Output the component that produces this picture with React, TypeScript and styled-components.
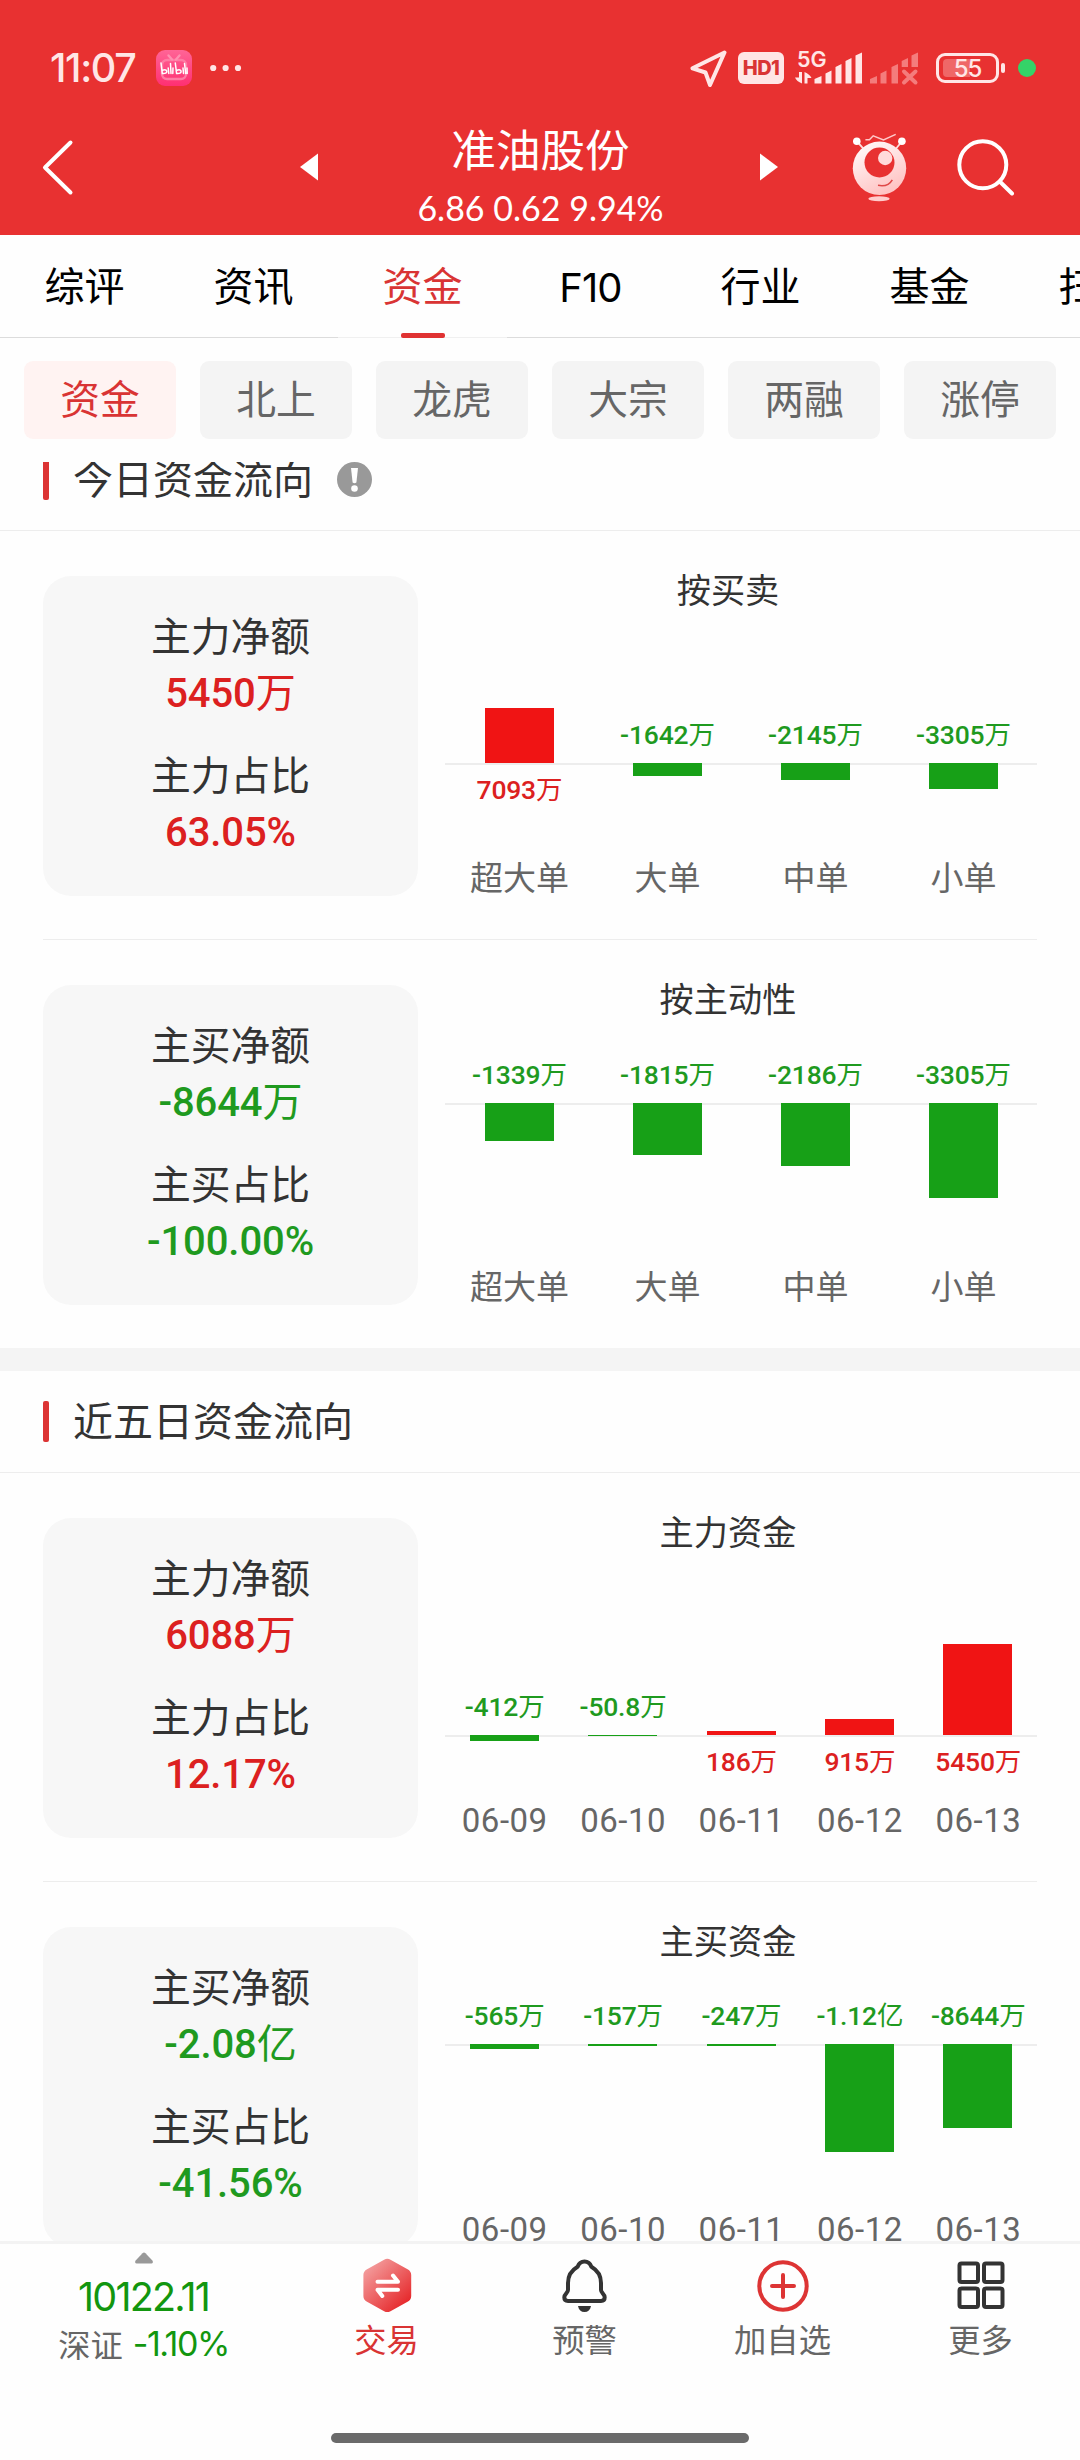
import React from "react";
import styled, { createGlobalStyle, css } from "styled-components";

const CJK = `"Noto Sans CJK SC", sans-serif`;
const DIN = `Roboto, "Noto Sans CJK SC", sans-serif`;
const GEO = `Inter, "Noto Sans CJK SC", sans-serif`;

const RED = "#d93434";
const UP = "#dc2020";
const DOWN = "#1f9a1f";
const UP_BAR = "#f01414";
const DOWN_BAR = "#17a017";

const GlobalStyle = createGlobalStyle`
  * { box-sizing: border-box; }
  body { margin: 0; background: #fff; }
`;

const Screen = styled.div`
  width: 1080px;
  height: 2460px;
  display: flex;
  flex-direction: column;
  overflow: hidden;
  background: #fefefe;
  font-family: ${CJK};
  white-space: nowrap;
`;

/* ---------- red top area ---------- */

const Top = styled.header`
  height: 235px;
  flex: none;
  background: #e83131;
  color: #fff;
`;

const StatusBar = styled.div`
  height: 100px;
  padding: 36px 44px 0 50px;
  display: flex;
  justify-content: space-between;
`;

const StatusGroup = styled.div`
  height: 64px;
  display: flex;
  align-items: center;
`;

const Clock = styled.span`
  width: 106px;
  font: 500 39.5px/64px ${GEO};
  letter-spacing: -1.3px;
  color: #ffe6e6;
`;

const AppBadge = styled.div`
  width: 36px;
  height: 36px;
  margin-right: 18px;
  border-radius: 9px;
  overflow: hidden;
  background: linear-gradient(#ff6496, #ff2f72);
  svg { display: block; }
`;

const HdBadge = styled.span`
  width: 46px;
  height: 32px;
  margin: 0 11px 0 11px;
  border-radius: 6px;
  background: #ffe6e6;
  color: ${RED};
  font: 800 20px/33px ${GEO};
  letter-spacing: -0.6px;
  text-align: center;
`;

const Network = styled.div`
  position: relative;
  width: 124px;
  height: 36px;
  svg { display: block; }
`;

const NetworkLabel = styled.span`
  position: absolute;
  left: 2px;
  top: 0;
  font: 600 21.5px/18px ${GEO};
  color: #ffe6e6;
`;

const Battery = styled.div`
  position: relative;
  width: 63px;
  height: 30px;
  margin: 0 2px 0 17px;
  border: 3px solid #ffe6e6;
  border-radius: 9px;
  padding: 3px 4px;
`;

const BatteryFill = styled.div`
  width: 27px;
  height: 18px;
  border-radius: 4px 0 0 4px;
  background: #ef6767;
`;

const BatteryText = styled.span`
  position: absolute;
  inset: 0;
  font: 500 24px/25px ${GEO};
  letter-spacing: -1px;
  text-align: center;
  color: #ffe6e6;
`;

const BatteryCap = styled.div`
  width: 4px;
  height: 10px;
  border-radius: 2px;
  background: #ffe6e6;
  margin-right: 13px;
`;

const LiveDot = styled.div`
  width: 18px;
  height: 18px;
  border-radius: 50%;
  background: #35d368;
`;

const TitleBar = styled.div`
  height: 135px;
  display: grid;
  grid-template-columns: 300px 478px 75px 1fr;
  svg { display: block; }
`;

const BackSlot = styled.div`
  padding: 39px 0 0 41px;
`;

const StockSwitch = styled.div`
  display: flex;
  justify-content: space-between;
`;

const Arrow = styled.div`
  padding-top: 53px;
`;

const StockInfo = styled.div`
  padding-left: 3px;
`;

const StockName = styled.div`
  margin-top: 22px;
  font-size: 44.6px;
  line-height: 52px;
  text-align: center;
`;

const StockQuote = styled.div`
  font: 400 34px/44px Lato, sans-serif;
  margin-top: 12px;
  text-align: center;
`;

const Actions = styled.div`
  grid-column: 4;
  display: flex;
  gap: 44px;
  padding-top: 32px;
  margin-left: -3px;
`;

/* ---------- tabs and chips ---------- */

const Tabs = styled.nav`
  flex: none;
  height: 103px;
  display: flex;
  overflow: hidden;
`;

const Tab = styled.div<{ $active?: boolean }>`
  flex: 0 0 169px;
  height: 103px;
  display: flex;
  flex-direction: column;
  justify-content: space-between;
  align-items: center;
  border-bottom: 1px solid ${(p) => (p.$active ? "#f0f0f0" : "#dcdcdc")};
  font-family: ${CJK};
  font-size: 40px;
  line-height: 98px;
  color: ${(p) => (p.$active ? RED : "#000")};
`;

const Latin = styled.span`
  font-family: ${GEO};
  letter-spacing: -0.9px;
  line-height: 105px;
  padding-right: 2px;
`;

const TabMark = styled.div`
  width: 44px;
  height: 6px;
  margin-bottom: -1px;
  border-radius: 2px;
  background: #e03232;
`;

const Chips = styled.div`
  flex: none;
  height: 124px;
  padding: 23px 24px 0;
  display: flex;
  gap: 24px;
`;

const Chip = styled.div<{ $active?: boolean }>`
  width: 152px;
  height: 78px;
  border-radius: 9px;
  background: ${(p) => (p.$active ? "#fff3f2" : "#f4f4f4")};
  color: ${(p) => (p.$active ? RED : "#666")};
  font-size: 39.8px;
  line-height: 72px;
  text-align: center;
`;

/* ---------- sections ---------- */

const Content = styled.main`
  flex: none;
  height: 1779px;
  overflow: hidden;
`;

const SectionHead = styled.div<{ $tucked?: boolean }>`
  height: 102px;
  margin-top: ${(p) => (p.$tucked ? "-33px" : "0")};
  padding-left: 43px;
  display: flex;
  align-items: center;
  border-bottom: 1px solid #ededed;
`;

const SectionMark = styled.div`
  width: 6px;
  height: 41px;
  border-radius: 2px;
  background: #dc3434;
`;

const SectionTitle = styled.h2`
  margin: 0 24px 0 24px;
  font-weight: 400;
  font-size: 40px;
  line-height: 60px;
  color: #333;
  padding-bottom: 5px;
`;

const Block = styled.section<{ $last?: boolean }>`
  height: 409px;
  margin: 0 43px;
  display: flex;
  border-bottom: ${(p) => (p.$last ? "none" : "1px solid #ededed")};
`;

const Band = styled.div`
  height: 23px;
  margin-top: -1px;
  background: #f4f4f4;
`;

const Card = styled.div`
  flex: none;
  width: 375px;
  height: 320px;
  margin-top: 45px;
  padding-top: 33px;
  border-radius: 28px;
  background: #f7f7f7;
  text-align: center;
`;

const CardLabel = styled.div`
  font-size: 39.8px;
  line-height: 50px;
  color: #333;
`;

const tone = css<{ $up: boolean }>`
  color: ${(p) => (p.$up ? UP : DOWN)};
`;

const CardValue = styled.div<{ $up: boolean }>`
  ${tone}
  font: 500 40px/56px ${DIN};
  letter-spacing: -0.1px;
  margin: 7px 0 26px;
`;

const Unit = styled.span`
  font-weight: 400;
  letter-spacing: 0;
`;

const ChartPane = styled.div`
  width: 619px;
  padding-top: 37px;
`;

const ChartTitle = styled.div`
  font-size: 34.2px;
  line-height: 40px;
  padding-left: 1px;
  text-align: center;
  color: #333;
`;

const Plot = styled.div`
  margin: 3px 0 0 27px;
  display: flex;
`;

const Column = styled.div`
  flex: 1 1 0;
  width: 0;
`;

const Above = styled.div`
  display: flex;
  flex-direction: column;
  justify-content: flex-end;
  align-items: center;
`;

const Below = styled.div`
  display: flex;
  flex-direction: column;
  align-items: center;
  border-top: 2px solid #ededed;
`;

const Bar = styled.div<{ $up: boolean }>`
  flex: none;
  width: 69px;
  background: ${(p) => (p.$up ? UP_BAR : DOWN_BAR)};
  margin-top: ${(p) => (p.$up ? "0" : "-2px")};
`;

const BarValue = styled.div<{ $up: boolean }>`
  ${tone}
  font: 500 26.5px/32px ${DIN};
  letter-spacing: -0.2px;
  padding-left: 1px;
  margin: ${(p) => (p.$up ? "9px 0 0" : "0 0 12px")};
`;

const Category = styled.div<{ $date?: boolean }>`
  font-family: ${(p) => (p.$date ? DIN : CJK)};
  font-size: 33px;
  line-height: ${(p) => (p.$date ? "42px" : "37px")};
  letter-spacing: ${(p) => (p.$date ? "0.5px" : "0")};
  padding-left: 1px;
  text-align: center;
  color: #666;
`;

/* ---------- bottom bar ---------- */

const BottomBar = styled.footer`
  flex: none;
  height: 219px;
  border-top: 3px solid #f3f3f3;
  display: flex;
  flex-direction: column;
  align-items: center;
  justify-content: space-between;
  svg { display: block; }
`;

const BottomRow = styled.div`
  width: 100%;
  display: grid;
  grid-template-columns: 287px repeat(4, 198px);
`;

const IndexCell = styled.div`
  display: flex;
  flex-direction: column;
  align-items: center;
  padding-top: 8px;
`;

const IndexValue = styled.div`
  margin-top: 9px;
  font: 400 39.5px/48px ${GEO};
  letter-spacing: -1.8px;
  color: #12960f;
`;

const IndexChange = styled.div`
  display: flex;
  align-items: center;
  gap: 10px;
  margin-top: -2px;
  font-size: 32.3px;
  line-height: 46px;
  color: #666;
  b { padding-top: 2px; font: 400 34px/46px ${GEO}; letter-spacing: -1.5px; color: #12960f; }
`;

const NavItem = styled.div<{ $active?: boolean }>`
  display: flex;
  flex-direction: column;
  align-items: center;
  padding: 12px 0 0 1px;
  font-size: 32.3px;
  line-height: 44px;
  color: ${(p) => (p.$active ? RED : "#666")};
  span { margin-top: 2px; }
`;

const HomeIndicator = styled.div`
  width: 418px;
  height: 10px;
  margin-bottom: 17px;
  border-radius: 5px;
  background: #6a6a6a;
`;

/* ---------- icons ---------- */

const BiliIcon = () => (
  <svg width="36" height="36" viewBox="0 0 36 36" fill="none">
    <rect x="6" y="10" width="24" height="19" rx="5" stroke="#ff7ba4" strokeWidth="2.400" />
    <path d="M12.500 5.500l3.500 4M23.500 5.500l-3.500 4" stroke="#ff8fb1" strokeWidth="2.400" strokeLinecap="round" />
    <g stroke="#fff" strokeWidth="1.500" strokeLinecap="round">
      <path d="M5 13l1.300 10.500c3 .3 4.500-.5 4.500-2s-1.800-2.200-4.200-1.200M12.200 18l.6 5.500M14.500 13.500l.5 10M17 18l-.2 5.500" />
      <path d="M19.300 13l1.300 10.500c3 .3 4.500-.5 4.500-2s-1.800-2.200-4.200-1.200M27 18l.5 5.500M28.500 13.500l1.200 10M31 18l.2 5.500" />
    </g>
  </svg>
);

const DotsIcon = () => (
  <svg width="32" height="8" viewBox="0 0 32 8" fill="#ffe6e6">
    <circle cx="3.200" cy="4" r="3.100" />
    <circle cx="15.600" cy="4" r="3.100" />
    <circle cx="28" cy="4" r="3.100" />
  </svg>
);

const LocationIcon = () => (
  <svg width="38" height="40" viewBox="689 49 38 40" fill="none">
    <path d="M724.500 53.500L692.500 69.300L705.500 73.500L710 86Z" stroke="#ffe6e6" strokeWidth="4" strokeLinejoin="round" />
  </svg>
);

const SignalIcon = () => (
  <svg width="124" height="36" viewBox="795 50 124 36">
    <g fill="#ffe6e6">
      <path d="M799 72h3v11.500c-3.500-1.500-6-3.500-7-6h4zM804.500 72c3.500 1.500 6 3.500 7 6h-4v5.500h-3z" />
      <path d="M814.500 79l7-3v7.500h-7zM825.500 73.500l6-3v13h-6zM835.500 67l6-3v19.500h-6zM845.500 61l6-3v25.500h-6zM855.500 55.500l6.500-3v31h-6.500z" />
    </g>
    <g fill="#f47c7c">
      <path d="M870 79l7-3v7.500h-7zM880.500 73.500l6-3v13h-6zM891.500 67l6.500-3v19.500h-6.500zM901.700 61l6.300-3v9h-6.300zM911.500 55.500l6.500-3v14.500h-6.500z" />
      <path d="M904 71.500l11.500 11M915.500 71.500l-11.500 11" stroke="#f47c7c" strokeWidth="4" strokeLinecap="round" />
    </g>
  </svg>
);

const BackIcon = () => (
  <svg width="34" height="58" viewBox="0 0 34 58" fill="none">
    <path d="M29.500 3.500L4 28.500L29.500 53.500" stroke="#fff" strokeWidth="4" strokeLinecap="round" strokeLinejoin="round" />
  </svg>
);

const TriangleIcon = ({ flip }: { flip?: boolean }) => (
  <svg width="18" height="28" viewBox="0 0 18 28" fill="#fff">
    <path d={flip ? "M0 0.500L18 14L0 27.500Z" : "M18 0.500L0 14L18 27.500Z"} />
  </svg>
);

const RobotIcon = () => (
  <svg width="62" height="72" viewBox="850 132 62 72" fill="none">
    <defs>
      <linearGradient id="robot" x1="0" y1="0" x2="0.500" y2="1">
        <stop offset="0" stopColor="#fff" />
        <stop offset="1" stopColor="#ffc4c4" />
      </linearGradient>
    </defs>
    <path d="M865.400 139.700h4l3.800-3.900 10.300 4.200 12.200-5.600" stroke="#ffc9c9" strokeWidth="1.500" />
    <path d="M857 141.300l7 8M902 141.300l-6.500 8" stroke="#ffe0e0" strokeWidth="1.800" />
    <circle cx="856.800" cy="141.300" r="3.800" fill="#fff" />
    <circle cx="901.900" cy="141.300" r="3.800" fill="#fff" />
    <circle cx="879.500" cy="168.300" r="26.700" fill="url(#robot)" />
    <circle cx="879.500" cy="162.500" r="15" fill="#e83131" />
    <circle cx="885.200" cy="158" r="7.200" fill="#ffdada" />
    <path d="M878 185.300q10 2 14.300-5.500" stroke="#e04848" strokeWidth="1.600" />
    <ellipse cx="879" cy="198.700" rx="10.700" ry="2.500" fill="#ffcccc" />
  </svg>
);

const SearchIcon = () => (
  <svg width="60" height="64" viewBox="957 132 60 64" fill="none" stroke="#fff" strokeWidth="4" strokeLinecap="round">
    <circle cx="983.800" cy="164.700" r="23.500" />
    <path d="M1001 181.700L1013 193.500" />
  </svg>
);

const InfoIcon = () => (
  <svg width="35" height="35" viewBox="0 0 35 35">
    <circle cx="17.500" cy="17.500" r="17.500" fill="#999" />
    <path d="M14 6h7l-1.600 14.500q-1.900 1.600-3.800 0z" fill="#fff" />
    <circle cx="17.500" cy="26.500" r="3.300" fill="#fff" />
  </svg>
);

const ExpandIcon = () => (
  <svg width="20" height="12" viewBox="0 0 20 12">
    <path d="M10 0.500Q10.800 0.500 11.500 1.200L18.800 9Q19.300 11.500 17.500 11.500H2.500Q0.700 11.500 1.200 9L8.500 1.200Q9.200 0.500 10 0.500Z" fill="#999" />
  </svg>
);

const TradeIcon = () => (
  <svg width="50" height="58" viewBox="361 2256 50 58" fill="none">
    <defs>
      <linearGradient id="trade" x1="0.100" y1="0.050" x2="0.850" y2="0.900">
        <stop offset="0" stopColor="#f4a3a3" />
        <stop offset="1" stopColor="#e6282b" />
      </linearGradient>
    </defs>
    <path
      d="M389.500 2259.700L407 2269.500Q410.200 2271.500 410.200 2275V2296Q410.200 2299.500 407 2301.500L389.500 2311.200Q386.300 2313 383.100 2311.200L365.600 2301.500Q362.400 2299.500 362.400 2296V2275Q362.400 2271.500 365.600 2269.500L383.100 2259.700Q386.300 2258 389.500 2259.700Z"
      fill="url(#trade)"
    />
    <path d="M376.500 2281.700H397L392 2275.500M397 2289.800H376.500L381.300 2296" stroke="#fff" strokeWidth="4" strokeLinecap="round" strokeLinejoin="round" />
  </svg>
);

const BellIcon = () => (
  <svg width="49" height="58" viewBox="0 0 49 58">
    <path
      d="M24.500 5.500c-3.600 0-5.600 1.600-6.900 5.200C11 14.500 8 20 8 27v7c0 3-3.700 3.700-3.700 7.300c0 2.300 1.500 3.700 3.700 3.700h33c2.200 0 3.700-1.400 3.700-3.700c0-3.600-3.700-4.300-3.700-7.300v-7c0-7-3-12.500-9.600-16.300c-1.300-3.600-3.300-5.200-6.900-5.200z"
      fill="none"
      stroke="#333"
      strokeWidth="4"
      strokeLinejoin="round"
    />
    <path d="M18 50h13c-.8 4-3 6-6.500 6s-5.700-2-6.500-6z" fill="#333" />
  </svg>
);

const PlusIcon = () => (
  <svg width="52" height="58" viewBox="0 0 52 58" fill="none" stroke="#dd3434" strokeWidth="4" strokeLinecap="round">
    <circle cx="26" cy="30" r="23.700" />
    <path d="M15 30h22M26 19v22" />
  </svg>
);

const GridIcon = () => (
  <svg width="48" height="58" viewBox="0 0 48 58" fill="none" stroke="#333" strokeWidth="4">
    <rect x="2.500" y="7.500" width="18.500" height="18.500" rx="2" />
    <rect x="27" y="7.500" width="18.500" height="18.500" rx="2" />
    <rect x="2.500" y="32.500" width="18.500" height="18.500" rx="2" />
    <rect x="27" y="32.500" width="18.500" height="18.500" rx="2" />
  </svg>
);

/* ---------- data ---------- */

type Point = { name: string; text: string; value: number };
type BlockData = {
  title: string;
  stats: [string, string][];
  zero: number;
  scale: number;
  dates?: boolean;
  points: Point[];
};

const today: BlockData[] = [
  {
    title: "按买卖",
    stats: [["主力净额", "5450万"], ["主力占比", "63.05%"]],
    zero: 232,
    scale: 0.00775,
    points: [
      { name: "超大单", text: "7093万", value: 7093 },
      { name: "大单", text: "-1642万", value: -1642 },
      { name: "中单", text: "-2145万", value: -2145 },
      { name: "小单", text: "-3305万", value: -3305 },
    ],
  },
  {
    title: "按主动性",
    stats: [["主买净额", "-8644万"], ["主买占比", "-100.00%"]],
    zero: 162.5,
    scale: 0.02884,
    points: [
      { name: "超大单", text: "-1339万", value: -1339 },
      { name: "大单", text: "-1815万", value: -1815 },
      { name: "中单", text: "-2186万", value: -2186 },
      { name: "小单", text: "-3305万", value: -3305 },
    ],
  },
];

const fiveDays: BlockData[] = [
  {
    title: "主力资金",
    stats: [["主力净额", "6088万"], ["主力占比", "12.17%"]],
    zero: 261.5,
    scale: 0.0166,
    dates: true,
    points: [
      { name: "06-09", text: "-412万", value: -412 },
      { name: "06-10", text: "-50.8万", value: -50.8 },
      { name: "06-11", text: "186万", value: 186 },
      { name: "06-12", text: "915万", value: 915 },
      { name: "06-13", text: "5450万", value: 5450 },
    ],
  },
  {
    title: "主买资金",
    stats: [["主买净额", "-2.08亿"], ["主买占比", "-41.56%"]],
    zero: 162,
    scale: 0.00966,
    dates: true,
    points: [
      { name: "06-09", text: "-565万", value: -565 },
      { name: "06-10", text: "-157万", value: -157 },
      { name: "06-11", text: "-247万", value: -247 },
      { name: "06-12", text: "-1.12亿", value: -11200 },
      { name: "06-13", text: "-8644万", value: -8644 },
    ],
  },
];

const Amount = ({ text }: { text: string }) => {
  const unit = /[万亿]$/.test(text) ? text.slice(-1) : "";
  return (
    <>
      {unit ? text.slice(0, -1) : text}
      {unit && <Unit>{unit}</Unit>}
    </>
  );
};

const FlowBlock = ({ data, last }: { data: BlockData; last?: boolean }) => (
  <Block $last={last}>
    <Card>
      {data.stats.map(([label, value]) => (
        <React.Fragment key={label}>
          <CardLabel>{label}</CardLabel>
          <CardValue $up={!value.startsWith("-")}><Amount text={value} /></CardValue>
        </React.Fragment>
      ))}
    </Card>
    <ChartPane>
      <ChartTitle>{data.title}</ChartTitle>
      <Plot>
        {data.points.map((p) => {
          const up = p.value > 0;
          const size = Math.max(1, Math.abs(p.value) * data.scale);
          const bar = <Bar $up={up} style={{ height: size }} />;
          const label = <BarValue $up={up}><Amount text={p.text} /></BarValue>;
          return (
            <Column key={p.name}>
              <Above style={{ height: data.zero - 80 }}>{up ? bar : label}</Above>
              <Below style={{ height: 327 - data.zero }}>{up ? label : bar}</Below>
              <Category $date={data.dates}>{p.name}</Category>
            </Column>
          );
        })}
      </Plot>
    </ChartPane>
  </Block>
);

export default function App() {
  return (
    <>
      <GlobalStyle />
      <Screen>
        <Top>
          <StatusBar>
            <StatusGroup>
              <Clock>11:07</Clock>
              <AppBadge><BiliIcon /></AppBadge>
              <DotsIcon />
            </StatusGroup>
            <StatusGroup>
              <LocationIcon />
              <HdBadge>HD1</HdBadge>
              <Network>
                <SignalIcon />
                <NetworkLabel>5G</NetworkLabel>
              </Network>
              <Battery>
                <BatteryFill />
                <BatteryText>55</BatteryText>
              </Battery>
              <BatteryCap />
              <LiveDot />
            </StatusGroup>
          </StatusBar>
          <TitleBar>
            <BackSlot><BackIcon /></BackSlot>
            <StockSwitch>
              <Arrow><TriangleIcon /></Arrow>
              <StockInfo>
                <StockName>准油股份</StockName>
                <StockQuote>6.86 0.62 9.94%</StockQuote>
              </StockInfo>
              <Arrow><TriangleIcon flip /></Arrow>
            </StockSwitch>
            <Actions>
              <RobotIcon />
              <SearchIcon />
            </Actions>
          </TitleBar>
        </Top>

        <Tabs>
          <Tab>综评</Tab>
          <Tab>资讯</Tab>
          <Tab $active>资金<TabMark /></Tab>
          <Tab><Latin>F10</Latin></Tab>
          <Tab>行业</Tab>
          <Tab>基金</Tab>
          <Tab>扫雷</Tab>
        </Tabs>

        <Chips>
          {["资金", "北上", "龙虎", "大宗", "两融", "涨停"].map((name, i) => (
            <Chip key={name} $active={i === 0}>{name}</Chip>
          ))}
        </Chips>

        <Content>
          <SectionHead $tucked>
            <SectionMark />
            <SectionTitle>今日资金流向</SectionTitle>
            <InfoIcon />
          </SectionHead>
          <FlowBlock data={today[0]} />
          <FlowBlock data={today[1]} last />
          <Band />
          <SectionHead>
            <SectionMark />
            <SectionTitle>近五日资金流向</SectionTitle>
          </SectionHead>
          <FlowBlock data={fiveDays[0]} />
          <FlowBlock data={fiveDays[1]} last />
        </Content>

        <BottomBar>
          <BottomRow>
            <IndexCell>
              <ExpandIcon />
              <IndexValue>10122.11</IndexValue>
              <IndexChange>深证<b>-1.10%</b></IndexChange>
            </IndexCell>
            <NavItem $active><TradeIcon /><span>交易</span></NavItem>
            <NavItem><BellIcon /><span>预警</span></NavItem>
            <NavItem><PlusIcon /><span>加自选</span></NavItem>
            <NavItem><GridIcon /><span>更多</span></NavItem>
          </BottomRow>
          <HomeIndicator />
        </BottomBar>
      </Screen>
    </>
  );
}
